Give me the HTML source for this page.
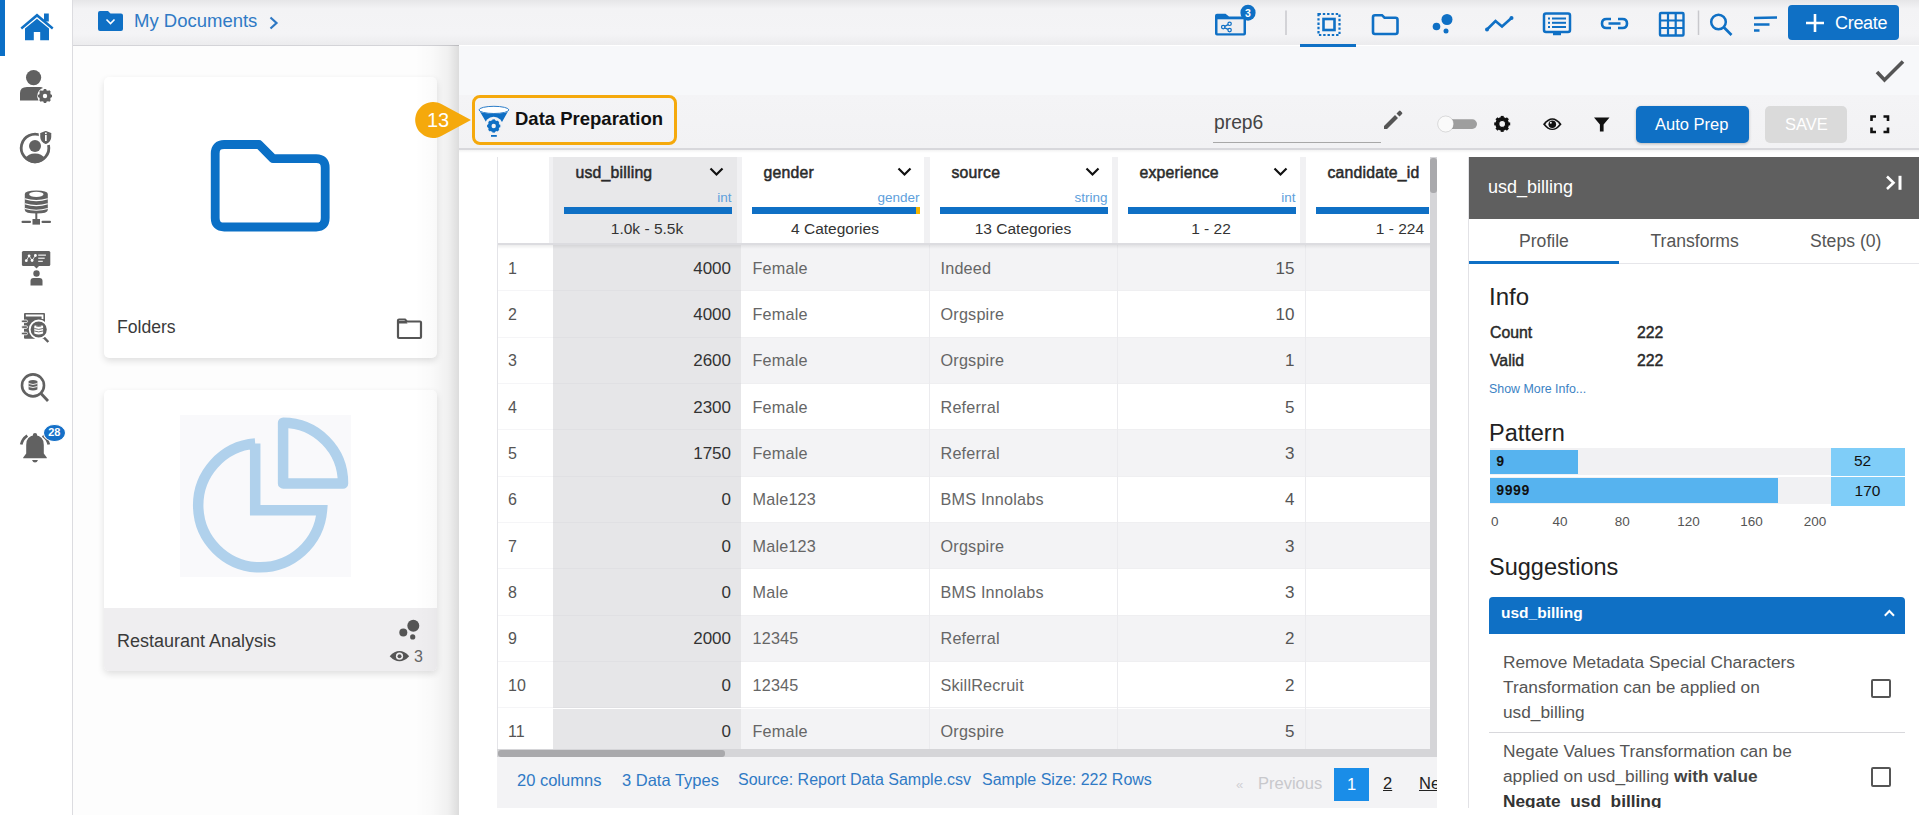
<!DOCTYPE html>
<html><head><meta charset="utf-8">
<style>
*{box-sizing:border-box;margin:0;padding:0}
html,body{width:1919px;height:815px;overflow:hidden;background:#fdfdfd;font-family:"Liberation Sans",sans-serif;color:#333}
.abs{position:absolute}
svg{position:absolute;overflow:visible}
#side{left:0;top:0;width:73px;height:815px;background:#fff;border-right:1px solid #dcdce0}
#top{left:73px;top:0;width:1846px;height:46px;background:linear-gradient(#e6e6e8,#f3f3f5 20%,#f4f4f6 75%,#ececee);border-bottom:1.5px solid #d4d4d8}
.card{background:#fff;border-radius:5px;box-shadow:0 3px 7px rgba(0,0,0,.12)}
#panel{left:459px;top:45px;width:1460px;height:770px;background:#fff}
.t{position:absolute;white-space:nowrap;line-height:1}
</style></head><body>
<div id="side" class="abs">
  <div class="abs" style="left:0;top:0;width:5px;height:56px;background:#0b6fc6"></div>
  <!-- home -->
  <svg style="left:0;top:0" width="73" height="60" fill="#0f70c5">
    <path d="M20.5 27.5 L37 13.5 L53.5 27.5 L52 29.5 L37 17 L22 29.5 Z"/>
    <rect x="44" y="13.5" width="4.8" height="8"/>
    <path d="M25 28.5 L37 18.8 L49 28.5 L49 40.2 L40.2 40.2 L40.2 32 L33.8 32 L33.8 40.2 L25 40.2 Z"/>
  </svg>
  <!-- user gear -->
  <svg style="left:0;top:60" width="73" height="50" fill="#616161">
    <circle cx="33.6" cy="17.6" r="7.6"/>
    <path d="M20 40.5 L20 33 Q20 27 27 27 L40 27 Q42 27 43 28 A8.5 8.5 0 0 0 38.5 40.5 Z"/>
    <g transform="translate(45,36)">
      <circle r="4.6" fill="none" stroke="#616161" stroke-width="3"/>
      <g stroke="#616161" stroke-width="2.6">
        <line x1="0" y1="-7" x2="0" y2="7"/><line x1="-7" y1="0" x2="7" y2="0"/>
        <line x1="-5" y1="-5" x2="5" y2="5"/><line x1="-5" y1="5" x2="5" y2="-5"/>
      </g>
      <circle r="2.2" fill="#fff"/>
    </g>
  </svg>
  <!-- user shield -->
  <svg style="left:0;top:125" width="73" height="50" fill="#616161">
    <path d="M41 10.5 A13.8 13.8 0 1 0 48.5 20" fill="none" stroke="#616161" stroke-width="2.8"/>
    <circle cx="35" cy="21" r="6"/>
    <path d="M25.5 33.5 Q28 28.5 35 28.5 Q42 28.5 44.5 33.5 A12 12 0 0 1 25.5 33.5 Z"/>
    <path d="M39.5 7.5 L45.8 5 L52 7.5 L52 12 Q52 17.5 45.8 20 Q39.5 17.5 39.5 12 Z" stroke="#fff" stroke-width="1.5"/>
    <rect x="45" y="10" width="1.7" height="6" fill="#fff"/><rect x="45" y="7.5" width="1.7" height="1.6" fill="#fff"/>
  </svg>
  <!-- database network -->
  <svg style="left:0;top:185" width="73" height="45" fill="#616161">
    <path d="M24.8 9 Q24.8 5.5 36.3 5.5 Q47.8 5.5 47.8 9 L47.8 25 Q47.8 28.5 36.3 28.5 Q24.8 28.5 24.8 25 Z"/>
    <ellipse cx="36.3" cy="9.3" rx="7.2" ry="2.6" fill="#fff"/>
    <path d="M24.8 13.8 Q36.3 17.5 47.8 13.8 M24.8 18.8 Q36.3 22.5 47.8 18.8 M24.8 23.5 Q36.3 27 47.8 23.5" stroke="#fff" stroke-width="1.2" fill="none"/>
    <rect x="35.3" y="28" width="2" height="6"/>
    <rect x="32.5" y="34" width="7.5" height="5.6"/>
    <rect x="21.5" y="35.8" width="9.5" height="2.2" rx="1"/><rect x="41.5" y="35.8" width="9.5" height="2.2" rx="1"/>
  </svg>
  <!-- presentation -->
  <svg style="left:0;top:245" width="73" height="45" fill="#616161">
    <rect x="21.9" y="6" width="28.4" height="15" rx="1.5"/>
    <path d="M34 21 L36.5 23.5 L39 21 Z"/>
    <path d="M26.3 15.7 L29.1 10.8 L32.1 15.5 L35.4 10.5" stroke="#fff" stroke-width=".8" fill="none"/>
    <g fill="#fff"><circle cx="26.3" cy="15.7" r="1.4"/><circle cx="29.1" cy="10.8" r="1.4"/><circle cx="32.1" cy="15.5" r="1.4"/><circle cx="35.4" cy="10.5" r="1.4"/></g>
    <rect x="38.2" y="9.5" width="7.7" height="1.3" fill="#e8e8e8"/><rect x="38.2" y="12.6" width="6.5" height="1.3" fill="#e8e8e8"/><rect x="38.2" y="15.7" width="4.6" height="1.3" fill="#e8e8e8"/>
    <circle cx="36.5" cy="28.5" r="3.2"/>
    <path d="M30.5 40.5 L30.5 36 Q30.5 33 33.5 33 L39.5 33 Q42.5 33 42.5 36 L42.5 40.5 Z"/>
  </svg>
  <!-- report search -->
  <svg style="left:0;top:305" width="73" height="45" fill="#616161">
    <rect x="24" y="7.9" width="21" height="25.8" rx="1"/>
    <path d="M25.8 10.5 L42.5 10.5 L42.5 14" stroke="#fff" stroke-width="1.8" fill="none"/>
    <rect x="21.5" y="15" width="6" height="2.6" rx="1.3" stroke="#fff" stroke-width=".8"/><rect x="21.5" y="20.8" width="6" height="2.6" rx="1.3" stroke="#fff" stroke-width=".8"/><rect x="21.5" y="27.2" width="6" height="2.6" rx="1.3" stroke="#fff" stroke-width=".8"/>
    <circle cx="38.7" cy="24.5" r="9" fill="#616161" stroke="#fff" stroke-width="1.8"/>
    <path d="M44.3 32.8 L48.3 37" stroke="#616161" stroke-width="2.4"/>
    <path d="M34.3 20.8 Q38.7 19 43.1 20.8 L43.1 28.5 Q38.7 30.3 34.3 28.5 Z" fill="#fff"/>
    <path d="M34.3 23.5 Q38.7 25.3 43.1 23.5 M34.3 26 Q38.7 27.8 43.1 26" stroke="#616161" stroke-width=".9" fill="none"/>
    <ellipse cx="38.7" cy="20.8" rx="3" ry=".9" fill="#616161"/>
  </svg>
  <!-- search db -->
  <svg style="left:0;top:365" width="73" height="45" fill="#616161">
    <circle cx="33" cy="20.4" r="11" fill="none" stroke="#616161" stroke-width="2.6"/>
    <path d="M41 28.5 L48 36" stroke="#616161" stroke-width="2.8"/>
    <path d="M28.6 16 Q33 14 37.4 16 L37.4 24.5 Q33 26.5 28.6 24.5 Z"/>
    <path d="M28.6 18.5 Q33 20.5 37.4 18.5 M28.6 21.5 Q33 23.5 37.4 21.5" stroke="#fff" stroke-width=".9" fill="none"/>
  </svg>
  <!-- bell -->
  <svg style="left:0;top:420" width="73" height="50" fill="#616161">
    <path d="M35 15.5 Q43.8 15.5 43.8 25 L43.8 33.5 L46.8 37.6 L46.8 38.2 L23.2 38.2 L23.2 37.6 L26.2 33.5 L26.2 25 Q26.2 15.5 35 15.5 Z"/>
    <circle cx="35" cy="15.2" r="2.2"/>
    <path d="M32 40 L38 40 Q37 42.6 35 42.6 Q33 42.6 32 40 Z"/>
    <path d="M27.3 15.6 Q22.3 19 21.2 24.6" stroke="#616161" stroke-width="2.7" fill="none"/>
    <path d="M42.7 15.6 Q47.7 19 48.8 24.6" stroke="#616161" stroke-width="2.7" fill="none"/>
  </svg>
  <div class="abs" style="left:43px;top:423.5px;width:22.5px;height:18px;border-radius:50%;background:#1570c8;border:1px solid #fff"></div>
  <div class="t" style="left:43px;top:427px;width:22.5px;text-align:center;color:#fff;font-size:11px;font-weight:bold">28</div>
</div>
<div id="top" class="abs"></div>
<!-- breadcrumb -->
<svg style="left:0;top:0" width="300" height="45">
  <path d="M98 13 Q98 11 100 11 L108 11 L110.5 13.5 L121 13.5 Q123 13.5 123 15.5 L123 29 Q123 31 121 31 L100 31 Q98 31 98 29 Z" fill="#0f70c5"/>
  <path d="M106.5 19.5 L110.5 23.5 L114.5 19.5" stroke="#fff" stroke-width="1.6" fill="none"/>
  <path d="M270.5 17.5 L276.5 23 L270.5 28.5" stroke="#2e78c4" stroke-width="2.2" fill="none"/>
</svg>
<div class="t" style="left:134px;top:12px;font-size:18.5px;color:#2f7ac5">My Documents</div>
<!-- top right icons -->
<svg style="left:1180px;top:0" width="740" height="50" fill="none" stroke="#0f70c5">
  <!-- share folder -->
  <path d="M35 15.8 Q35 13.8 37 13.8 L45.5 13.8 L49 16.6 L64 16.6 Q66 16.6 66 18.6 L66 33.6 Q66 35.6 64 35.6 L37 35.6 Q35 35.6 35 33.6 Z" fill="#0f70c5" stroke="none"/>
  <rect x="37.5" y="19.3" width="26" height="14" fill="#efeff1" stroke="none"/>
  <g stroke-width="1.2" fill="#efeff1"><circle cx="43.2" cy="27.1" r="1.7"/><circle cx="49.6" cy="23.8" r="1.7"/><circle cx="49.6" cy="30.1" r="1.7"/></g>
  <path d="M44.7 26.3 L48.1 24.6 M44.7 27.9 L48.1 29.3" stroke-width="1.3"/>
  <ellipse cx="68" cy="12.7" rx="7.6" ry="8" fill="#0f70c5" stroke="none"/>
  <!-- separator -->
  <line x1="106" y1="10.5" x2="106" y2="35" stroke="#c8c8cc" stroke-width="1.5"/>
  <!-- select -->
  <rect x="138.5" y="14" width="21" height="21" stroke-width="2.2" stroke-dasharray="2.4 1.9"/>
  <rect x="143.5" y="19" width="11" height="11" stroke-width="2.6"/>
  <!-- folder -->
  <path d="M195 15.2 L202 15.2 L204.5 17.7 L215.5 17.7 Q217.5 17.7 217.5 19.7 L217.5 32 Q217.5 34 215.5 34 L195 34 Q193 34 193 32 L193 17.2 Q193 15.2 195 15.2 Z" stroke-width="2.6"/>
  <!-- dots -->
  <g fill="#0f70c5" stroke="none"><circle cx="256.5" cy="26.5" r="3.8"/><circle cx="267" cy="19.5" r="5.5"/><circle cx="266" cy="31" r="2.5"/></g>
  <!-- trend -->
  <path d="M307 29.5 L315.5 21 L322 26.5 L331.5 18" stroke-width="2.6"/>
  <g fill="#0f70c5" stroke="none"><circle cx="307" cy="29.5" r="2"/><circle cx="331.5" cy="18" r="2"/></g>
  <!-- list monitor -->
  <rect x="364" y="13.5" width="26" height="18.5" rx="2" stroke-width="2.5"/>
  <path d="M373 34 L381 34" stroke-width="2.5"/>
  <g fill="#0f70c5" stroke="none"><rect x="368" y="17.5" width="2" height="2"/><rect x="372" y="17.5" width="14" height="2"/><rect x="368" y="21.8" width="2" height="2"/><rect x="372" y="21.8" width="14" height="2"/><rect x="368" y="26" width="2" height="2"/><rect x="372" y="26" width="14" height="2"/></g>
  <!-- link -->
  <path d="M431 19 L426.5 19 Q422 19 422 23.5 Q422 28 426.5 28 L431 28 M438 19 L442.5 19 Q447 19 447 23.5 Q447 28 442.5 28 L438 28 M428.5 23.5 L440.5 23.5" stroke-width="2.6"/>
  <!-- grid -->
  <rect x="480" y="13" width="23.5" height="22.5" rx="1" stroke-width="2.4"/>
  <path d="M488 13 L488 35.5 M495.7 13 L495.7 35.5 M480 20.5 L503.5 20.5 M480 28 L503.5 28" stroke-width="2.2"/>
  <!-- separator -->
  <line x1="518.5" y1="10.5" x2="518.5" y2="35" stroke="#c8c8cc" stroke-width="1.5"/>
  <!-- search -->
  <circle cx="538.5" cy="22" r="7.3" stroke-width="2.5"/>
  <path d="M543.8 27.3 L551.5 35" stroke-width="2.7"/>
  <!-- sort -->
  <path d="M574 18 L597 17.5 M574 24.5 L589.5 24.5 M574 30.5 L579.5 30.5" stroke-width="2.3"/>
</svg>
<div class="t" style="left:1240px;top:7.5px;width:16px;text-align:center;color:#fff;font-size:10.5px;font-weight:bold">3</div>
<div class="abs" style="left:1299.5px;top:44px;width:56px;height:3px;background:#0f70c5;z-index:5"></div>
<div class="abs" style="left:1788px;top:5px;width:111px;height:35px;border-radius:4px;background:#0f70c5"></div>
<svg style="left:1788px;top:5px" width="111" height="35"><path d="M27 9 L27 27 M18 18 L36 18" stroke="#fff" stroke-width="2.6"/></svg>
<div class="t" style="left:1835px;top:13.5px;font-size:18px;letter-spacing:-.3px;color:#fff">Create</div>
<div class="abs card" style="left:104px;top:77px;width:332.5px;height:281px"></div>
<svg style="left:0;top:0" width="460" height="360">
  <path d="M215.2 153.5 Q215.2 144.5 224.2 144.5 L259 144.5 L273 158.7 L316.2 158.7 Q325.2 158.7 325.2 167.7 L325.2 218 Q325.2 227 316.2 227 L224.2 227 Q215.2 227 215.2 218 Z" fill="none" stroke="#0b70c6" stroke-width="8.8" stroke-linejoin="round"/>
  <path d="M398 320.5 Q398 319.5 399 319.5 L405 319.5 L407 321.5 L420 321.5 Q421 321.5 421 322.5 L421 337 Q421 338 420 338 L399 338 Q398 338 398 337 Z" fill="none" stroke="#555" stroke-width="2.2"/>
  <path d="M398.5 321 L406 321 L407.5 323.5 L398.5 323.5 Z" fill="#555"/>
</svg>
<div class="t" style="left:117px;top:319px;font-size:17.6px;color:#3a3a3a">Folders</div>
<div class="abs card" style="left:104px;top:390px;width:332.5px;height:281px;overflow:hidden">
  <div class="abs" style="left:76px;top:25px;width:171px;height:162px;background:#f9f9fb"></div>
  <div class="abs" style="left:0;top:218px;width:333px;height:63px;background:#efeef0"></div>
</div>
<svg style="left:0;top:380" width="460" height="300">
  <path d="M255.2 63.5 L255.2 130.2 L322 130.2 A62 62 0 1 1 255.2 63.5" fill="none" stroke="#b0d1ec" stroke-width="10.5"/>
  <path d="M283.1 42.8 A60 60 0 0 1 343 103.4 L283.1 103.4 Z" fill="none" stroke="#b0d1ec" stroke-width="10.5" stroke-linejoin="round"/>
  <g fill="#555"><circle cx="413.3" cy="245.7" r="6"/><circle cx="403.3" cy="252.4" r="4"/><circle cx="412.7" cy="256.9" r="2.6"/></g>
  <path d="M389.7 276.2 Q399.5 266 409.2 276.2 Q399.5 286.5 389.7 276.2 Z" fill="#555"/>
  <circle cx="399.5" cy="276.2" r="3.6" fill="#efeef0"/><circle cx="399.5" cy="276.2" r="2" fill="#555"/>
</svg>
<div class="t" style="left:117px;top:632px;font-size:18px;color:#3a3a3a">Restaurant Analysis</div>
<div class="t" style="left:414px;top:648.5px;font-size:16px;color:#666">3</div>
<div id="panel" class="abs"></div>
<div class="abs" style="left:415px;top:45px;width:44px;height:770px;background:linear-gradient(to right,rgba(0,0,0,0),rgba(0,0,0,.015) 40%,rgba(0,0,0,.05) 75%,rgba(0,0,0,.13))"></div>
<div class="abs" style="left:459px;top:46px;width:1460px;height:49px;background:#f7f8fa"></div>
<div class="abs" style="left:459px;top:95px;width:1460px;height:55px;background:linear-gradient(#f4f4f6,#f2f2f4);border-bottom:2.5px solid #d8d8dc"></div>
<div class="abs" style="left:459px;top:150px;width:1460px;height:3px;background:linear-gradient(rgba(0,0,0,.05),rgba(0,0,0,0))"></div>
<svg style="left:0;top:0" width="1919" height="160"><path d="M1877 72 L1884.5 80 L1903 61.5" fill="none" stroke="#555" stroke-width="3.6"/><path d="M1384 126 L1384 129 L1387 129 L1398 118 L1395 115 Z M1396.5 113.5 L1399.5 116.5 L1402 114 Q1402.8 113.2 1402 112.4 L1400.6 111 Q1399.8 110.2 1399 111 Z" fill="#555"/><rect x="1445" y="119.3" width="32" height="9.6" rx="4.8" fill="#9e9e9e"/><circle cx="1445.7" cy="124" r="8" fill="#fafafa" stroke="rgba(0,0,0,.12)" stroke-width="1"/><g transform="translate(1502.2,123.9)"><circle r="5.2" fill="none" stroke="#111" stroke-width="3.2"/><g stroke="#111" stroke-width="3"><line x1="0" y1="-8" x2="0" y2="8"/><line x1="-8" y1="0" x2="8" y2="0"/><line x1="-5.7" y1="-5.7" x2="5.7" y2="5.7"/><line x1="-5.7" y1="5.7" x2="5.7" y2="-5.7"/></g><circle r="2.8" fill="#f3f3f5"/></g><path d="M1543 124.2 Q1552.3 112.5 1561.6 124.2 Q1552.3 135.9 1543 124.2 Z" fill="#111"/><path d="M1545.3 124.2 Q1552.3 115.2 1559.3 124.2 Q1552.3 133.2 1545.3 124.2 Z" fill="#f3f3f5"/><circle cx="1552.3" cy="124.2" r="3.8" fill="#111"/><circle cx="1550.8" cy="122.8" r="1" fill="#f3f3f5"/><path d="M1594 117.5 L1609.5 117.5 L1603.6 124.5 L1603.6 131.6 L1599.9 131.6 L1599.9 124.5 Z" fill="#111"/><path d="M1871.5 121 L1871.5 116.5 L1876 116.5 M1883.5 116.5 L1888 116.5 L1888 121 M1888 127.5 L1888 132 L1883.5 132 M1876 132 L1871.5 132 L1871.5 127.5" fill="none" stroke="#111" stroke-width="2.6"/></svg>
<div class="t" style="left:1214px;top:113px;font-size:19.3px;color:#444">prep6</div>
<div class="abs" style="left:1212.5px;top:142px;width:168px;height:1px;background:#a8a8a8"></div>
<div class="abs" style="left:1635.5px;top:105.8px;width:113px;height:37.4px;border-radius:5px;background:#0f70c5;box-shadow:0 1px 3px rgba(0,0,0,.25)"></div>
<div class="t" style="left:1655px;top:116px;font-size:16.5px;color:#fff">Auto Prep</div>
<div class="abs" style="left:1764.5px;top:105.8px;width:82px;height:37.4px;border-radius:5px;background:#dadada"></div>
<div class="t" style="left:1785px;top:116px;font-size:16.5px;color:#fff">SAVE</div>
<div class="abs" style="left:472px;top:95px;width:205px;height:49.5px;border:3.6px solid #f5a90c;border-radius:8px"></div>
<div class="t" style="left:515px;top:109.5px;font-size:18.5px;font-weight:bold;color:#111">Data Preparation</div>
<svg style="left:0;top:0" width="600" height="160"><path d="M479 110 Q479 113.5 494 113.5 Q508.8 113.5 508.8 110 L502 122 L486 122 Z" fill="#0f6fc4"/><ellipse cx="493.9" cy="109.9" rx="14.9" ry="3.6" fill="#fff" stroke="#2a7cc8" stroke-width="1"/><circle cx="493.7" cy="126" r="9.3" fill="#f2f2f4"/><g transform="translate(493.7,126)"><circle r="4.3" fill="none" stroke="#0f6fc4" stroke-width="3.2"/><g stroke="#0f6fc4" stroke-width="2.6"><line x1="0" y1="-6.6" x2="0" y2="6.6"/><line x1="-6.6" y1="0" x2="6.6" y2="0"/><line x1="-4.7" y1="-4.7" x2="4.7" y2="4.7"/><line x1="-4.7" y1="4.7" x2="4.7" y2="-4.7"/></g><circle r="2.2" fill="#f2f2f4"/></g><rect x="491" y="135" width="5.8" height="1.8" fill="#0f6fc4"/><path d="M441.8 104.2 L471 120 L441.8 135.8 A18 18 0 1 1 441.8 104.2 Z" fill="#f5a90c"/></svg>
<div class="t" style="left:427px;top:110px;font-size:20px;color:#fff">13</div>
<div class="abs" style="left:497px;top:157px;width:940px;height:600px;background:#fff;border-left:1px solid #e4e4e8"></div>
<div class="abs" style="left:498px;top:157px;width:932px;height:87px;background:#f1f1f3"></div>
<div class="abs" style="left:498px;top:157px;width:51px;height:87px;background:#fff"></div>
<div class="abs" style="left:553px;top:157px;width:183.5px;height:87px;background:#e8e8ea"></div>
<div class="t" style="left:575.5px;top:164.5px;font-size:15.8px;color:#2a2a2a;letter-spacing:.2px;-webkit-text-stroke:.5px #2a2a2a">usd_billing</div>
<svg style="left:709px;top:166px" width="16" height="12"><path d="M1.5 2.5 L7.5 8.5 L13.5 2.5" fill="none" stroke="#111" stroke-width="2.2"/></svg>
<div class="t" style="left:553px;width:178.5px;text-align:right;top:190.5px;font-size:13.5px;color:#5ea0dc">int</div>
<div class="abs" style="left:564px;top:207px;width:167.5px;height:7px;background:#0f70c5"></div>
<div class="t" style="left:547.0px;width:200px;text-align:center;top:221px;font-size:15.5px;color:#333">1.0k - 5.5k</div>
<div class="abs" style="left:742px;top:157px;width:182px;height:87px;background:#fff"></div>
<div class="t" style="left:763.5px;top:164.5px;font-size:15.8px;color:#2a2a2a;letter-spacing:.2px;-webkit-text-stroke:.5px #2a2a2a">gender</div>
<svg style="left:897px;top:166px" width="16" height="12"><path d="M1.5 2.5 L7.5 8.5 L13.5 2.5" fill="none" stroke="#111" stroke-width="2.2"/></svg>
<div class="t" style="left:741px;width:178.5px;text-align:right;top:190.5px;font-size:13.5px;color:#5ea0dc">gender</div>
<div class="abs" style="left:752px;top:207px;width:167.5px;height:7px;background:#0f70c5"></div>
<div class="abs" style="left:916.0px;top:207px;width:3.5px;height:7px;background:#f4b400"></div>
<div class="t" style="left:735.0px;width:200px;text-align:center;top:221px;font-size:15.5px;color:#333">4 Categories</div>
<div class="abs" style="left:930px;top:157px;width:182px;height:87px;background:#fff"></div>
<div class="t" style="left:951.5px;top:164.5px;font-size:15.8px;color:#2a2a2a;letter-spacing:.2px;-webkit-text-stroke:.5px #2a2a2a">source</div>
<svg style="left:1085px;top:166px" width="16" height="12"><path d="M1.5 2.5 L7.5 8.5 L13.5 2.5" fill="none" stroke="#111" stroke-width="2.2"/></svg>
<div class="t" style="left:929px;width:178.5px;text-align:right;top:190.5px;font-size:13.5px;color:#5ea0dc">string</div>
<div class="abs" style="left:940px;top:207px;width:167.5px;height:7px;background:#0f70c5"></div>
<div class="t" style="left:923.0px;width:200px;text-align:center;top:221px;font-size:15.5px;color:#333">13 Categories</div>
<div class="abs" style="left:1118px;top:157px;width:182px;height:87px;background:#fff"></div>
<div class="t" style="left:1139.5px;top:164.5px;font-size:15.8px;color:#2a2a2a;letter-spacing:.2px;-webkit-text-stroke:.5px #2a2a2a">experience</div>
<svg style="left:1273px;top:166px" width="16" height="12"><path d="M1.5 2.5 L7.5 8.5 L13.5 2.5" fill="none" stroke="#111" stroke-width="2.2"/></svg>
<div class="t" style="left:1117px;width:178.5px;text-align:right;top:190.5px;font-size:13.5px;color:#5ea0dc">int</div>
<div class="abs" style="left:1128px;top:207px;width:167.5px;height:7px;background:#0f70c5"></div>
<div class="t" style="left:1111.0px;width:200px;text-align:center;top:221px;font-size:15.5px;color:#333">1 - 22</div>
<div class="abs" style="left:1306px;top:157px;width:125px;height:87px;background:#fff"></div>
<div class="t" style="left:1327.5px;top:164.5px;font-size:15.8px;color:#2a2a2a;letter-spacing:.2px;-webkit-text-stroke:.5px #2a2a2a">candidate_id</div>
<div class="abs" style="left:1316px;top:207px;width:113px;height:7px;background:#0f70c5"></div>
<div class="t" style="left:1300px;width:200px;text-align:center;top:221px;font-size:15.5px;color:#333">1 - 224</div>
<div class="abs" style="left:498px;top:243px;width:932px;height:2px;background:#dcdce0"></div>
<div class="abs" style="left:498px;top:245px;width:932px;height:4px;background:linear-gradient(rgba(0,0,0,.07),rgba(0,0,0,0));z-index:2"></div>
<div class="abs" style="left:741px;top:245.00px;width:689px;height:46.35px;background:#f3f3f5;border-bottom:1px solid #efeff1"></div>
<div class="abs" style="left:553px;top:245.00px;width:188px;height:46.35px;background:#e6e6e8;border-bottom:1px solid #e0e0e3"></div>
<div class="abs" style="left:498px;top:245.00px;width:55px;height:46.35px;background:#fff;border-bottom:1px solid #f5f5f7"></div>
<div class="t" style="left:508px;top:260.50px;font-size:16px;color:#555">1</div>
<div class="t" style="left:530px;width:201px;text-align:right;top:259.50px;font-size:17px;color:#333">4000</div>
<div class="t" style="left:752.5px;top:259.50px;font-size:16.2px;color:#666;letter-spacing:.2px">Female</div>
<div class="t" style="left:940.5px;top:259.50px;font-size:16.2px;color:#666;letter-spacing:.2px">Indeed</div>
<div class="t" style="left:1100px;width:194.5px;text-align:right;top:259.50px;font-size:17px;color:#555">15</div>
<div class="abs" style="left:741px;top:291.35px;width:689px;height:46.35px;background:#fff;border-bottom:1px solid #efeff1"></div>
<div class="abs" style="left:553px;top:291.35px;width:188px;height:46.35px;background:#e6e6e8;border-bottom:1px solid #e0e0e3"></div>
<div class="abs" style="left:498px;top:291.35px;width:55px;height:46.35px;background:#fff;border-bottom:1px solid #f5f5f7"></div>
<div class="t" style="left:508px;top:306.85px;font-size:16px;color:#555">2</div>
<div class="t" style="left:530px;width:201px;text-align:right;top:305.85px;font-size:17px;color:#333">4000</div>
<div class="t" style="left:752.5px;top:305.85px;font-size:16.2px;color:#666;letter-spacing:.2px">Female</div>
<div class="t" style="left:940.5px;top:305.85px;font-size:16.2px;color:#666;letter-spacing:.2px">Orgspire</div>
<div class="t" style="left:1100px;width:194.5px;text-align:right;top:305.85px;font-size:17px;color:#555">10</div>
<div class="abs" style="left:741px;top:337.70px;width:689px;height:46.35px;background:#f3f3f5;border-bottom:1px solid #efeff1"></div>
<div class="abs" style="left:553px;top:337.70px;width:188px;height:46.35px;background:#e6e6e8;border-bottom:1px solid #e0e0e3"></div>
<div class="abs" style="left:498px;top:337.70px;width:55px;height:46.35px;background:#fff;border-bottom:1px solid #f5f5f7"></div>
<div class="t" style="left:508px;top:353.20px;font-size:16px;color:#555">3</div>
<div class="t" style="left:530px;width:201px;text-align:right;top:352.20px;font-size:17px;color:#333">2600</div>
<div class="t" style="left:752.5px;top:352.20px;font-size:16.2px;color:#666;letter-spacing:.2px">Female</div>
<div class="t" style="left:940.5px;top:352.20px;font-size:16.2px;color:#666;letter-spacing:.2px">Orgspire</div>
<div class="t" style="left:1100px;width:194.5px;text-align:right;top:352.20px;font-size:17px;color:#555">1</div>
<div class="abs" style="left:741px;top:384.05px;width:689px;height:46.35px;background:#fff;border-bottom:1px solid #efeff1"></div>
<div class="abs" style="left:553px;top:384.05px;width:188px;height:46.35px;background:#e6e6e8;border-bottom:1px solid #e0e0e3"></div>
<div class="abs" style="left:498px;top:384.05px;width:55px;height:46.35px;background:#fff;border-bottom:1px solid #f5f5f7"></div>
<div class="t" style="left:508px;top:399.55px;font-size:16px;color:#555">4</div>
<div class="t" style="left:530px;width:201px;text-align:right;top:398.55px;font-size:17px;color:#333">2300</div>
<div class="t" style="left:752.5px;top:398.55px;font-size:16.2px;color:#666;letter-spacing:.2px">Female</div>
<div class="t" style="left:940.5px;top:398.55px;font-size:16.2px;color:#666;letter-spacing:.2px">Referral</div>
<div class="t" style="left:1100px;width:194.5px;text-align:right;top:398.55px;font-size:17px;color:#555">5</div>
<div class="abs" style="left:741px;top:430.40px;width:689px;height:46.35px;background:#f3f3f5;border-bottom:1px solid #efeff1"></div>
<div class="abs" style="left:553px;top:430.40px;width:188px;height:46.35px;background:#e6e6e8;border-bottom:1px solid #e0e0e3"></div>
<div class="abs" style="left:498px;top:430.40px;width:55px;height:46.35px;background:#fff;border-bottom:1px solid #f5f5f7"></div>
<div class="t" style="left:508px;top:445.90px;font-size:16px;color:#555">5</div>
<div class="t" style="left:530px;width:201px;text-align:right;top:444.90px;font-size:17px;color:#333">1750</div>
<div class="t" style="left:752.5px;top:444.90px;font-size:16.2px;color:#666;letter-spacing:.2px">Female</div>
<div class="t" style="left:940.5px;top:444.90px;font-size:16.2px;color:#666;letter-spacing:.2px">Referral</div>
<div class="t" style="left:1100px;width:194.5px;text-align:right;top:444.90px;font-size:17px;color:#555">3</div>
<div class="abs" style="left:741px;top:476.75px;width:689px;height:46.35px;background:#fff;border-bottom:1px solid #efeff1"></div>
<div class="abs" style="left:553px;top:476.75px;width:188px;height:46.35px;background:#e6e6e8;border-bottom:1px solid #e0e0e3"></div>
<div class="abs" style="left:498px;top:476.75px;width:55px;height:46.35px;background:#fff;border-bottom:1px solid #f5f5f7"></div>
<div class="t" style="left:508px;top:492.25px;font-size:16px;color:#555">6</div>
<div class="t" style="left:530px;width:201px;text-align:right;top:491.25px;font-size:17px;color:#333">0</div>
<div class="t" style="left:752.5px;top:491.25px;font-size:16.2px;color:#666;letter-spacing:.2px">Male123</div>
<div class="t" style="left:940.5px;top:491.25px;font-size:16.2px;color:#666;letter-spacing:.2px">BMS Innolabs</div>
<div class="t" style="left:1100px;width:194.5px;text-align:right;top:491.25px;font-size:17px;color:#555">4</div>
<div class="abs" style="left:741px;top:523.10px;width:689px;height:46.35px;background:#f3f3f5;border-bottom:1px solid #efeff1"></div>
<div class="abs" style="left:553px;top:523.10px;width:188px;height:46.35px;background:#e6e6e8;border-bottom:1px solid #e0e0e3"></div>
<div class="abs" style="left:498px;top:523.10px;width:55px;height:46.35px;background:#fff;border-bottom:1px solid #f5f5f7"></div>
<div class="t" style="left:508px;top:538.60px;font-size:16px;color:#555">7</div>
<div class="t" style="left:530px;width:201px;text-align:right;top:537.60px;font-size:17px;color:#333">0</div>
<div class="t" style="left:752.5px;top:537.60px;font-size:16.2px;color:#666;letter-spacing:.2px">Male123</div>
<div class="t" style="left:940.5px;top:537.60px;font-size:16.2px;color:#666;letter-spacing:.2px">Orgspire</div>
<div class="t" style="left:1100px;width:194.5px;text-align:right;top:537.60px;font-size:17px;color:#555">3</div>
<div class="abs" style="left:741px;top:569.45px;width:689px;height:46.35px;background:#fff;border-bottom:1px solid #efeff1"></div>
<div class="abs" style="left:553px;top:569.45px;width:188px;height:46.35px;background:#e6e6e8;border-bottom:1px solid #e0e0e3"></div>
<div class="abs" style="left:498px;top:569.45px;width:55px;height:46.35px;background:#fff;border-bottom:1px solid #f5f5f7"></div>
<div class="t" style="left:508px;top:584.95px;font-size:16px;color:#555">8</div>
<div class="t" style="left:530px;width:201px;text-align:right;top:583.95px;font-size:17px;color:#333">0</div>
<div class="t" style="left:752.5px;top:583.95px;font-size:16.2px;color:#666;letter-spacing:.2px">Male</div>
<div class="t" style="left:940.5px;top:583.95px;font-size:16.2px;color:#666;letter-spacing:.2px">BMS Innolabs</div>
<div class="t" style="left:1100px;width:194.5px;text-align:right;top:583.95px;font-size:17px;color:#555">3</div>
<div class="abs" style="left:741px;top:615.80px;width:689px;height:46.35px;background:#f3f3f5;border-bottom:1px solid #efeff1"></div>
<div class="abs" style="left:553px;top:615.80px;width:188px;height:46.35px;background:#e6e6e8;border-bottom:1px solid #e0e0e3"></div>
<div class="abs" style="left:498px;top:615.80px;width:55px;height:46.35px;background:#fff;border-bottom:1px solid #f5f5f7"></div>
<div class="t" style="left:508px;top:631.30px;font-size:16px;color:#555">9</div>
<div class="t" style="left:530px;width:201px;text-align:right;top:630.30px;font-size:17px;color:#333">2000</div>
<div class="t" style="left:752.5px;top:630.30px;font-size:16.2px;color:#666;letter-spacing:.2px">12345</div>
<div class="t" style="left:940.5px;top:630.30px;font-size:16.2px;color:#666;letter-spacing:.2px">Referral</div>
<div class="t" style="left:1100px;width:194.5px;text-align:right;top:630.30px;font-size:17px;color:#555">2</div>
<div class="abs" style="left:741px;top:662.15px;width:689px;height:46.35px;background:#fff;border-bottom:1px solid #efeff1"></div>
<div class="abs" style="left:553px;top:662.15px;width:188px;height:46.35px;background:#e6e6e8;border-bottom:1px solid #e0e0e3"></div>
<div class="abs" style="left:498px;top:662.15px;width:55px;height:46.35px;background:#fff;border-bottom:1px solid #f5f5f7"></div>
<div class="t" style="left:508px;top:677.65px;font-size:16px;color:#555">10</div>
<div class="t" style="left:530px;width:201px;text-align:right;top:676.65px;font-size:17px;color:#333">0</div>
<div class="t" style="left:752.5px;top:676.65px;font-size:16.2px;color:#666;letter-spacing:.2px">12345</div>
<div class="t" style="left:940.5px;top:676.65px;font-size:16.2px;color:#666;letter-spacing:.2px">SkillRecruit</div>
<div class="t" style="left:1100px;width:194.5px;text-align:right;top:676.65px;font-size:17px;color:#555">2</div>
<div class="abs" style="left:741px;top:708.50px;width:689px;height:46.35px;background:#f3f3f5;border-bottom:1px solid #efeff1"></div>
<div class="abs" style="left:553px;top:708.50px;width:188px;height:46.35px;background:#e6e6e8;border-bottom:1px solid #e0e0e3"></div>
<div class="abs" style="left:498px;top:708.50px;width:55px;height:46.35px;background:#fff;border-bottom:1px solid #f5f5f7"></div>
<div class="t" style="left:508px;top:724.00px;font-size:16px;color:#555">11</div>
<div class="t" style="left:530px;width:201px;text-align:right;top:723.00px;font-size:17px;color:#333">0</div>
<div class="t" style="left:752.5px;top:723.00px;font-size:16.2px;color:#666;letter-spacing:.2px">Female</div>
<div class="t" style="left:940.5px;top:723.00px;font-size:16.2px;color:#666;letter-spacing:.2px">Orgspire</div>
<div class="t" style="left:1100px;width:194.5px;text-align:right;top:723.00px;font-size:17px;color:#555">5</div>
<div class="abs" style="left:929px;top:245px;width:1px;height:510px;background:#ebebee"></div>
<div class="abs" style="left:1117px;top:245px;width:1px;height:510px;background:#ebebee"></div>
<div class="abs" style="left:1305px;top:245px;width:1px;height:510px;background:#ebebee"></div>
<div class="abs" style="left:1429.5px;top:157px;width:7.5px;height:600px;background:#d5d5d8"></div>
<div class="abs" style="left:1430px;top:158px;width:6.5px;height:35px;border-radius:3px;background:#a9a9ac"></div>
<div class="abs" style="left:497px;top:749px;width:940px;height:8px;background:#d5d5d8"></div>
<div class="abs" style="left:498px;top:749.5px;width:227px;height:7px;border-radius:3px;background:#a9a9ac"></div>
<div class="abs" style="left:497px;top:757px;width:940px;height:50.5px;background:#f3f3f5"></div>
<div class="t" style="left:517px;top:771.5px;font-size:16.5px;color:#2f7ac5">20 columns</div>
<div class="t" style="left:622px;top:771.5px;font-size:16.5px;color:#2f7ac5">3 Data Types</div>
<div class="t" style="left:738px;top:771.5px;font-size:16px;color:#2f7ac5">Source: Report Data Sample.csv</div>
<div class="t" style="left:982px;top:771.5px;font-size:16px;color:#2f7ac5">Sample Size: 222 Rows</div>
<div class="t" style="left:1236px;top:778px;font-size:13px;color:#d0d0d4">&laquo;</div>
<div class="t" style="left:1258px;top:775px;font-size:16.5px;color:#c8c8cc">Previous</div>
<div class="abs" style="left:1334px;top:768px;width:35px;height:33px;background:#1a8de8"></div>
<div class="t" style="left:1334px;width:35px;text-align:center;top:776px;font-size:16.5px;color:#fff">1</div>
<div class="t" style="left:1383px;top:775px;font-size:16.5px;color:#222;text-decoration:underline">2</div>
<div class="abs" style="left:1419px;top:770px;width:18px;height:30px;overflow:hidden"><div class="t" style="left:0;top:5px;font-size:16.5px;color:#222;text-decoration:underline">Next</div></div>
<div class="abs" style="left:1468px;top:157px;width:451px;height:651px;background:#fff;border-left:1px solid #e2e2e6"></div>
<div class="abs" style="left:1469px;top:157px;width:450px;height:61.5px;background:#5f5f5f"></div>
<div class="t" style="left:1488px;top:178px;font-size:18px;color:#fff">usd_billing</div>
<svg style="left:1880px;top:170px" width="30" height="25"><path d="M7 6.5 L13.5 12.8 L7 19" fill="none" stroke="#fff" stroke-width="2.6"/><rect x="18.5" y="5.8" width="3" height="14" fill="#fff"/></svg>
<div class="abs" style="left:1469px;top:218.5px;width:450px;height:45px;background:#fff;border-bottom:1px solid #e6e6ea"></div>
<div class="abs" style="left:1469px;top:261px;width:150px;height:2.5px;background:#0f70c5"></div>
<div class="t" style="left:1519px;top:232.5px;font-size:17.6px;color:#555">Profile</div>
<div class="t" style="left:1650.5px;top:232.5px;font-size:17.6px;color:#555">Transforms</div>
<div class="t" style="left:1810px;top:232.5px;font-size:17.6px;color:#555">Steps (0)</div>
<div class="t" style="left:1489px;top:285px;font-size:24px;color:#222">Info</div>
<div class="t" style="left:1490px;top:325px;font-size:15.8px;color:#2a2a2a;-webkit-text-stroke:.45px #2a2a2a">Count</div>
<div class="t" style="left:1490px;top:353px;font-size:15.8px;color:#2a2a2a;-webkit-text-stroke:.45px #2a2a2a">Valid</div>
<div class="t" style="left:1637px;top:325px;font-size:15.8px;color:#2a2a2a;-webkit-text-stroke:.45px #2a2a2a">222</div>
<div class="t" style="left:1637px;top:353px;font-size:15.8px;color:#2a2a2a;-webkit-text-stroke:.45px #2a2a2a">222</div>
<div class="t" style="left:1489px;top:383px;font-size:12.4px;color:#3b82c4">Show More Info...</div>
<div class="t" style="left:1489px;top:422px;font-size:23.5px;color:#222">Pattern</div>
<div class="abs" style="left:1489.6px;top:448px;width:341px;height:26.5px;background:#f1f1f3"></div>
<div class="abs" style="left:1489.6px;top:449.5px;width:88.5px;height:24px;background:#56b3ef"></div>
<div class="abs" style="left:1831px;top:448px;width:73.5px;height:27.5px;background:#7fcdf8"></div>
<div class="abs" style="left:1489.6px;top:476.5px;width:341px;height:27px;background:#f1f1f3"></div>
<div class="abs" style="left:1489.6px;top:478.3px;width:288.8px;height:24.3px;background:#56b3ef"></div>
<div class="abs" style="left:1831px;top:477px;width:73.5px;height:29px;background:#7fcdf8"></div>
<div class="t" style="left:1496px;top:455px;font-size:14px;font-weight:bold;color:#111;font-family:'Liberation Mono',monospace">9</div>
<div class="t" style="left:1496px;top:484px;font-size:14px;font-weight:bold;color:#111;font-family:'Liberation Mono',monospace">9999</div>
<div class="t" style="left:1831px;width:63px;text-align:center;top:453px;font-size:15.5px;color:#111">52</div>
<div class="t" style="left:1836px;width:63px;text-align:center;top:483px;font-size:15.5px;color:#111">170</div>
<div class="t" style="left:1491px;top:515px;font-size:13.5px;color:#555">0</div>
<div class="t" style="left:1552.6px;top:515px;font-size:13.5px;color:#555">40</div>
<div class="t" style="left:1614.7px;top:515px;font-size:13.5px;color:#555">80</div>
<div class="t" style="left:1677.3px;top:515px;font-size:13.5px;color:#555">120</div>
<div class="t" style="left:1740.3px;top:515px;font-size:13.5px;color:#555">160</div>
<div class="t" style="left:1803.8px;top:515px;font-size:13.5px;color:#555">200</div>
<div class="t" style="left:1489px;top:556px;font-size:23.5px;color:#222">Suggestions</div>
<div class="abs" style="left:1489px;top:597px;width:416px;height:36.5px;background:#0f70c5;border-radius:4px 4px 0 0"></div>
<div class="t" style="left:1501px;top:605px;font-size:15.5px;font-weight:bold;color:#fff">usd_billing</div>
<svg style="left:1880px;top:605px" width="20" height="15"><path d="M4.8 10.8 L9.4 6 L14 10.8" fill="none" stroke="#fff" stroke-width="2"/></svg>
<div class="t" style="left:1503px;top:654px;font-size:17.3px;color:#555">Remove Metadata Special Characters</div>
<div class="t" style="left:1503px;top:679px;font-size:17.3px;color:#555">Transformation can be applied on</div>
<div class="t" style="left:1503px;top:704px;font-size:17.3px;color:#555">usd_billing</div>
<div class="abs" style="left:1871.2px;top:678.6px;width:19.6px;height:19.7px;border:2px solid #555;border-radius:2px"></div>
<div class="abs" style="left:1489px;top:731.5px;width:416px;height:1px;background:#d8d8dc"></div>
<div class="t" style="left:1503px;top:743px;font-size:17.3px;color:#555">Negate Values Transformation can be</div>
<div class="t" style="left:1503px;top:768px;font-size:17.3px;color:#555">applied on usd_billing <b style="color:#444">with value</b></div>
<div class="t" style="left:1503px;top:793px;font-size:17.3px;color:#555"><b style="color:#333">Negate_usd_billing</b></div>
<div class="abs" style="left:1871.2px;top:767px;width:19.6px;height:19.7px;border:2px solid #555;border-radius:2px"></div>
<div class="abs" style="left:1469px;top:808px;width:450px;height:7px;background:#fff"></div>
</body></html>
